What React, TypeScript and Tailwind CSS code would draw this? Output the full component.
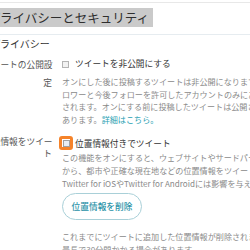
const font = { fontFamily: '"Noto Sans CJK JP", "Noto Sans", sans-serif' };

const Checkbox = ({ focused }: { focused?: boolean }) => {
  if (focused) {
    return (
      <span className="flex h-[14px] w-[14px] shrink-0 items-center justify-center rounded-[3px] border-[3px] border-[#f5832a]">
        <span className="h-[7px] w-[7px] border border-[#a0a0a0] bg-[#e9eef4]" />
      </span>
    );
  }
  return <span className="h-[7px] w-[7px] shrink-0 border border-[#b4b4b4] bg-[#f2f2f2]" />;
};

export default function App() {
  return (
    <div className="h-[250px] w-[250px] overflow-hidden bg-white pt-[2px]" style={font}>
      <div className="border-t border-[#e8e8e8]">
        <div className="border-b border-[#e6ecf0] pb-[6px] pt-[1px]">
          <h1 className="-ml-[12.5px] inline-block whitespace-nowrap bg-[#cacaca] pr-[4px] text-[12.5px] leading-[19px] font-normal text-[#2e2e2e]">
            プライバシーとセキュリティ
          </h1>
        </div>

        <div className="-ml-[17px]">
          <h2 className="ml-[7px] mt-[2px] whitespace-nowrap text-[10px] leading-[14px] text-[#333]">プライバシー</h2>

          <div className="mt-[5px] flex">
            <div className="w-[69px] shrink-0 text-right text-[8.7px] leading-[18px] text-[#555]">
              <div className="whitespace-nowrap">ツイートの公開設</div>
              <div>定</div>
            </div>
            <div className="ml-[10px] min-w-0 flex-1">
              <div className="flex h-[16px] items-center gap-[6px]">
                <Checkbox />
                <span className="whitespace-nowrap text-[8.7px] text-[#333]">ツイートを非公開にする</span>
              </div>
              <p className="mt-[4px] whitespace-nowrap text-[8.1px] leading-[12.6px] text-[#8a8a8a]">
                オンにした後に投稿するツイートは非公開になります。現在のフォ
                <br />
                ロワーと今後フォローを許可したアカウントのみにあなたのツイートが表示
                <br />
                されます。オンにする前に投稿したツイートは公開されたままの状態になる
                <br />
                あります。<span className="text-[#2a9fb3]">詳細はこちら。</span>
              </p>
            </div>
          </div>

          <div className="mt-[10px] flex">
            <div className="w-[69px] shrink-0 text-right text-[8.7px] leading-[12px] text-[#555]">
              <div className="whitespace-nowrap">位置情報をツイー</div>
              <div>ト</div>
            </div>
            <div className="ml-[7px] min-w-0 flex-1">
              <div className="flex h-[14px] items-center gap-[2px]">
                <Checkbox focused />
                <span className="whitespace-nowrap text-[8.7px] text-[#333]">位置情報付きでツイート</span>
              </div>
              <p className="ml-[3px] mt-[2px] whitespace-nowrap text-[8.1px] leading-[12.8px] text-[#8a8a8a]">
                この機能をオンにすると、ウェブサイトやサードパーティのアプリケーション
                <br />
                から、都市や正確な現在地などの位置情報をツイートに追加できます。
                <br />
                Twitter for iOSやTwitter for Androidには影響を与えません。
              </p>
              <button className="ml-[3px] mt-[1px] h-[27px] w-[80px] rounded-full border border-[#a9d0d8] text-[8.7px] font-medium text-[#2a93a8]">
                位置情報を削除
              </button>
              <p className="ml-[3px] mt-[10px] whitespace-nowrap text-[8.1px] leading-[13px] text-[#8a8a8a]">
                これまでにツイートに追加した位置情報が削除されます。この処理には
                <br />
                最長で30分間かかる場合があります。
              </p>
            </div>
          </div>
        </div>
      </div>
    </div>
  );
}
